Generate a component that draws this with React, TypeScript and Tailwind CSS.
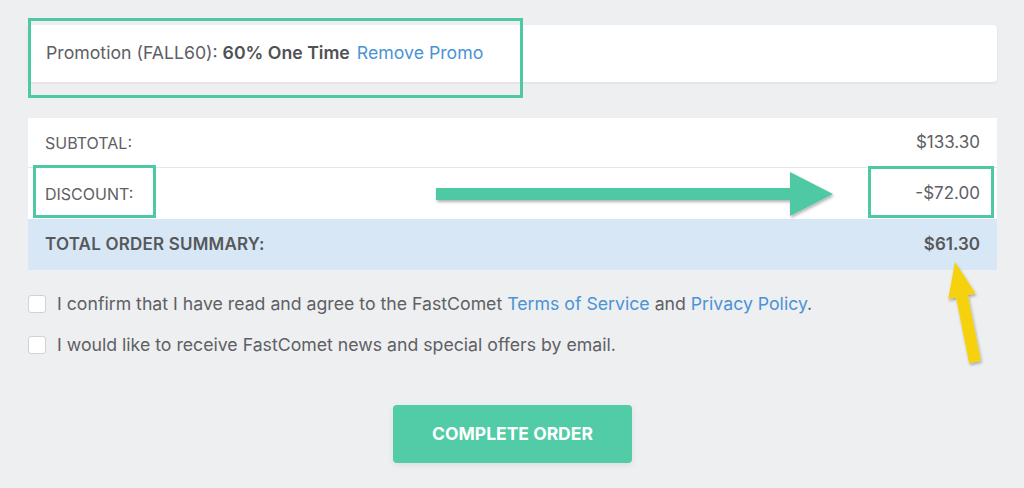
import { useState } from "react";

const rows = [
  { label: "Subtotal:", value: "$133.30" },
  { label: "Discount:", value: "-$72.00" },
];

function Checkbox({ checked, onChange }: { checked: boolean; onChange: () => void }) {
  return (
    <button
      onClick={onChange}
      className="w-[18px] h-[18px] shrink-0 rounded-[3px] border border-[#cfd3d8] bg-white flex items-center justify-center"
    >
      {checked && <span className="w-2 h-2 bg-[#52cba7] rounded-sm" />}
    </button>
  );
}

export default function App() {
  const [tos, setTos] = useState(false);
  const [news, setNews] = useState(false);

  return (
    <div
      className="relative w-full h-[488px] bg-[#eeeff1] px-[28px] pr-[27px] overflow-hidden text-[#5e6064]"
      style={{ fontFamily: "Inter, 'Noto Sans', sans-serif" }}
    >
      {/* promo */}
      <div className="mt-[25px] h-[57px] bg-white rounded-sm shadow-[0_1px_3px_rgba(0,0,0,0.08)] flex items-center px-[18px] text-[17.7px]">
        <span>Promotion (FALL60):&nbsp;</span>
        <span className="font-semibold text-[#4f5154]">60% One Time</span>
        <a className="ml-[7px] text-[#4a93d6] cursor-pointer">Remove Promo</a>
      </div>

      {/* summary table */}
      <div className="mt-[36px] bg-white">
        {rows.map((r, i) => (
          <div
            key={r.label}
            className={`flex items-center justify-between px-[17px] ${i === 0 ? "h-[50px] border-b border-[#e4e6e9]" : "h-[51px]"}`}
          >
            <span className="uppercase text-[16px]">{r.label}</span>
            <span className="text-[17px]">{r.value}</span>
          </div>
        ))}
        <div className="h-[51px] flex items-center justify-between px-[17px] bg-[#d8e7f5] font-semibold text-[17px] text-[#55585c]">
          <span className="uppercase tracking-[0.2px]">Total Order Summary:</span>
          <span>$61.30</span>
        </div>
      </div>

      {/* agreements */}
      <div className="mt-[22px] flex flex-col gap-[17px] text-[17.7px] leading-[24px]">
        <label className="flex items-center gap-[11px]">
          <Checkbox checked={tos} onChange={() => setTos(!tos)} />
          <span>
            I confirm that I have read and agree to the FastComet{" "}
            <a className="text-[#4a93d6]">Terms of Service</a> and{" "}
            <a className="text-[#4a93d6]">Privacy Policy</a>.
          </span>
        </label>
        <label className="flex items-center gap-[11px]">
          <Checkbox checked={news} onChange={() => setNews(!news)} />
          <span>I would like to receive FastComet news and special offers by email.</span>
        </label>
      </div>

      <div className="flex justify-center mt-[48px]">
        <button className="w-[239px] h-[58px] rounded-[4px] bg-[#52cba7] text-white font-bold text-[17.5px] uppercase shadow-[0_2px_6px_rgba(0,0,0,0.08)]">
          Complete Order
        </button>
      </div>

      {/* annotations */}
      <div className="absolute left-[28px] top-[18px] w-[495px] h-[80px] border-[3px] border-[#4fc9a4] pointer-events-none" />
      <div className="absolute left-[33px] top-[165px] w-[123px] h-[53px] border-[3px] border-[#4fc9a4] pointer-events-none" />
      <div className="absolute left-[868px] top-[166px] w-[126px] h-[52px] border-[3px] border-[#4fc9a4] pointer-events-none" />
      <svg className="absolute inset-0 pointer-events-none" width="1024" height="488" viewBox="0 0 1024 488">
        <defs>
          <filter id="sh" x="-10%" y="-30%" width="120%" height="160%">
            <feDropShadow dx="1" dy="2" stdDeviation="1.5" floodColor="#000" floodOpacity="0.3" />
          </filter>
        </defs>
        <polygon
          points="436,188 790,188 790,172 833,194 790,216 790,200 436,200"
          fill="#4fc9a4"
          filter="url(#sh)"
        />
        <polygon
          points="955,262 975.6,293.6 967.8,295.1 980.9,360.8 969.1,363.2 956,297.5 948.2,299"
          fill="#f5d20f"
          filter="url(#sh)"
        />
      </svg>
    </div>
  );
}
